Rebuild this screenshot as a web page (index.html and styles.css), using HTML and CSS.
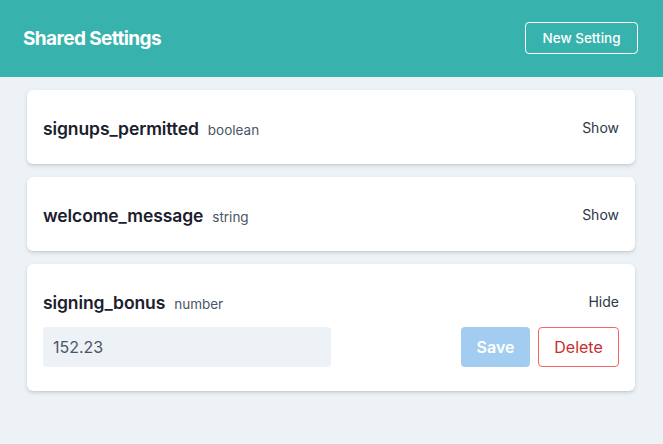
FILE: index.html
```html
<!DOCTYPE html>
<html>
<head>
<meta charset="utf-8">
<link rel="stylesheet" href="styles.css">
</head>
<body>
<header class="topbar">
  <h1 class="title">Shared Settings</h1>
  <button class="btn-new">New Setting</button>
</header>
<main class="list">
  <section class="card">
    <div class="row">
      <div class="name-wrap"><span class="name">signups_permitted</span><span class="type">boolean</span></div>
      <span class="toggle">Show</span>
    </div>
  </section>
  <section class="card">
    <div class="row">
      <div class="name-wrap"><span class="name">welcome_message</span><span class="type">string</span></div>
      <span class="toggle">Show</span>
    </div>
  </section>
  <section class="card">
    <div class="row">
      <div class="name-wrap"><span class="name">signing_bonus</span><span class="type">number</span></div>
      <span class="toggle">Hide</span>
    </div>
    <div class="edit-row">
      <input class="value-input" type="text" value="152.23">
      <div class="actions">
        <button class="btn-save">Save</button>
        <button class="btn-delete">Delete</button>
      </div>
    </div>
  </section>
</main>
</body>
</html>
```
FILE: styles.css
```css
* { box-sizing: border-box; }
html, body { margin: 0; padding: 0; }
body {
  background: #edf2f7;
  font-family: Inter, "Noto Sans", sans-serif;
  color: #1a202c;
  width: 663px;
  height: 444px;
  overflow: hidden;
}
.topbar {
  background: #38b2ac;
  height: 77px;
  display: flex;
  align-items: center;
  justify-content: space-between;
  padding: 0 25px 0 23px;
}
.title {
  margin: 0;
  color: #fff;
  font-size: 19px;
  font-weight: 700;
  letter-spacing: -0.6px;
}
.btn-new {
  background: transparent;
  color: #fff;
  border: 1px solid #fff;
  border-radius: 4px;
  height: 32px;
  width: 113px;
  font-family: inherit;
  font-size: 13.5px;
  font-weight: 500;
  margin-top: -1px;
}
.list {
  padding: 13px 28px 0 27px;
  display: flex;
  flex-direction: column;
  gap: 13px;
}
.card {
  background: #fff;
  border-radius: 6px;
  box-shadow: 0 2px 4px rgba(0,0,0,0.12), 0 1px 2px rgba(0,0,0,0.06);
  padding: 24px 16px;
}
.row {
  height: 26px;
  display: flex;
  align-items: center;
  justify-content: space-between;
}
.name-wrap { display: flex; align-items: baseline; padding-top: 2px; }
.name {
  font-size: 17.5px;
  font-weight: 600;
  color: #1a202c;
  letter-spacing: -0.1px;
}
.type {
  font-size: 13.5px;
  color: #4a5568;
  margin-left: 9px;
}
.toggle {
  font-size: 14px;
  color: #2d3748;
}
.edit-row {
  margin-top: 13px;
  display: flex;
  justify-content: space-between;
  align-items: center;
}
.value-input {
  width: 288px;
  height: 40px;
  border: none;
  border-radius: 4px;
  background: #edf2f7;
  font-family: inherit;
  font-size: 16px;
  color: #4a5568;
  padding: 0 10px;
  outline: none;
}
.actions { display: flex; gap: 8px; }
.btn-save {
  width: 69px;
  height: 40px;
  border: none;
  border-radius: 4px;
  background: #a3cdf0;
  color: #fff;
  font-family: inherit;
  font-size: 16px;
  font-weight: 600;
}
.btn-delete {
  width: 81px;
  height: 40px;
  background: #fff;
  border: 1px solid #f56565;
  border-radius: 4px;
  color: #c53030;
  font-family: inherit;
  font-size: 16px;
  font-weight: 400;
}
```
